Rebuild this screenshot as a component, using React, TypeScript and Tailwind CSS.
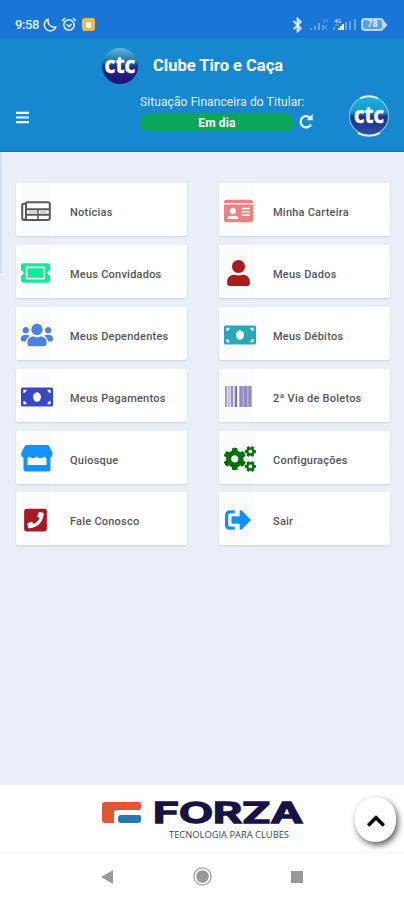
import type { ReactNode } from "react";
import {
  FaBars,
  FaBluetoothB,
  FaChevronUp,
  FaCogs,
  FaIdCard,
  FaMoneyBill,
  FaPhoneSquare,
  FaSignOutAlt,
  FaTicketAlt,
  FaUser,
  FaUsers,
} from "react-icons/fa";

type MenuItem = {
  label: string;
  icon: ReactNode;
};

function NewsIcon() {
  return (
    <svg width="30" height="21" viewBox="0 0 30 21" className="shrink-0" fill="none" stroke="#595959" strokeWidth="2">
      <path d="M5 1.2h22q1.8 0 1.8 1.8v14q0 2-2 2H3.2Q1.2 19 1.2 17V4.5q0-1.8 1.8-1.8h2M5 1.2v15q0 2.8-2 2.8" />
      <path d="M8 5.2h18" stroke="#fff" />
      <path d="M5 8.3h23M5 13.8h23" strokeWidth="1.9" />
      <path d="M8 11h8m3 0h7" strokeWidth="1.6" stroke="#c4c4c4" />
      <path d="M17 8.3v10" strokeWidth="1.5" />
    </svg>
  );
}

function BarcodeIcon() {
  return (
    <svg width="29" height="21" viewBox="0 0 29 21" className="shrink-0">
      <path d="M1 0h27v21H1z" fill="#d9d4ea" />
      <path d="M1 0h1.6v21H1zM7 0h2v21H7zM16 0h2.5v21H16zM20 0h3v21h-3zM24.500 0h2.500v21h-2.500z" fill="#9b93c3" />
      <path d="M4.500 0h1v21h-1zM15 0h13v21H15z" fill="#8a80b9" fillOpacity=".45" />
      <path d="M11.300 0h1.600v21h-1.600z" fill="#625a93" />
      <path d="M13 0h1.800v21H13z" fill="#fff" />
    </svg>
  );
}

function StoreIcon() {
  return (
    <svg width="32" height="27" viewBox="0 0 32 27" className="shrink-0" fill="#1192fc">
      <path d="M5.500 0h21q1 0 1.600 1l3 6q1.400 5-3 6-3 .6-5-1.500-2 2-3.700 1.500-2 .3-3.700-1.500-2 2-3.700 1.500-2 .3-3.700-1.500-2 2.200-5 1.500-4.300-1-2.700-6l3.300-6q.6-1 1.600-1z" />
      <path d="M2.500 12h4v8h19v-8h4v12.500q0 2-2 2h-23q-2 0-2-2z" />
    </svg>
  );
}

const items: MenuItem[] = [
  { label: "Notícias", icon: <NewsIcon /> },
  { label: "Minha Carteira", icon: <FaIdCard className="h-[26px] w-[29px] shrink-0 text-[#f08080]" /> },
  { label: "Meus Convidados", icon: <FaTicketAlt className="h-[26px] w-[29px] shrink-0 text-[#05ee91]" /> },
  { label: "Meus Dados", icon: <FaUser className="ml-[3px] h-[26px] w-[23px] shrink-0 text-[#aa1c20]" /> },
  { label: "Meus Dependentes", icon: <FaUsers className="h-[26px] w-[32px] shrink-0 text-[#4c82e2]" /> },
  { label: "Meus Débitos", icon: <FaMoneyBill className="h-[26px] w-[32px] shrink-0 text-[#2ba8b5]" /> },
  { label: "Meus Pagamentos", icon: <FaMoneyBill className="h-[26px] w-[32px] shrink-0 text-[#3848c2]" /> },
  { label: "2ª Via de Boletos", icon: <BarcodeIcon /> },
  { label: "Quiosque", icon: <StoreIcon /> },
  { label: "Configurações", icon: <FaCogs className="h-[26px] w-[32px] shrink-0 text-[#087009]" /> },
  { label: "Fale Conosco", icon: <FaPhoneSquare className="ml-[3px] h-[26px] w-[23px] shrink-0 text-[#a61b21]" /> },
  { label: "Sair", icon: <FaSignOutAlt className="ml-px h-[26px] w-[26px] shrink-0 text-[#1490fb]" /> },
];

function StatusBar() {
  return (
    <div className="flex h-[38px] shrink-0 items-center bg-[#1976d6] pl-[15px] pr-[16px] pt-[11px] text-[#e2f0ff]">
      <span className="w-[28px] text-[13px] font-medium leading-none tracking-[-0.4px]">9:58</span>
      <svg width="14" height="14" viewBox="0 0 14 14" fill="none" stroke="currentColor" strokeWidth="1.5">
        <path d="M5.2 1.2A6 6 0 1 0 12.9 9 6.300 6.300 0 0 1 5.200 1.200Z" strokeLinejoin="round" />
      </svg>
      <svg className="ml-[4px]" width="16" height="15" viewBox="0 0 16 15" fill="none" stroke="currentColor" strokeWidth="1.6">
        <circle cx="8" cy="8" r="5.200" />
        <path d="M1 4l3-3M15 4l-3-3M5.500 7.500 8 9.500l2.500-2.500" />
      </svg>
      <span className="ml-[5px] flex h-[13px] w-[13px] items-center justify-center rounded-[3px] bg-[#eeb85e]">
        <span className="h-[6px] w-[5px] rounded-full bg-white" />
      </span>
      <FaBluetoothB className="ml-auto h-[16px] w-[11px]" stroke="currentColor" strokeWidth="22" />
      <svg className="ml-[6px]" width="49" height="15" viewBox="0 0 49 15">
        <g fill="#62a3e6">
          <rect x="1" y="11" width="2" height="2" />
          <rect x="5" y="9" width="2" height="4" />
          <rect x="9" y="6" width="2" height="7" />
          <rect x="13" y="8" width="1.5" height="5" />
          <rect x="36" y="5" width="2" height="8" />
          <rect x="40" y="4" width="2" height="9" />
          <rect x="45" y="2" width="2" height="11" />
          <rect x="24" y="10" width="2" height="3" />
        </g>
        <path d="m14 8 4 5m0-5-4 5M15 2v4M18 2v4M25 8h5" stroke="#62a3e6" />
        <path d="M29 13v-2h2V9h2V7h2v6z" fill="#dcecff" />
        <text x="25" y="6" fontSize="6" fill="#dcecff">
          4G
        </text>
      </svg>
      <span className="ml-[3px] flex h-[13px] w-[23px] items-center justify-center rounded-[4px] border-2 border-[#b8d8f9] bg-[#5c9fe5] text-[9px] font-bold leading-none">
        78
      </span>
      <svg width="4" height="8" viewBox="0 0 4 8">
        <path d="M0 0l3.500 4L0 8z" fill="#b8d8f9" />
      </svg>
    </div>
  );
}

function ClubLogo({ className, ring = false }: { className: string; ring?: boolean }) {
  const id = ring ? "ball-ring" : "ball";
  return (
    <svg viewBox="0 0 42 42" className={className}>
      <defs>
        <linearGradient id={id} x1="0" y1="0" x2="0" y2="1">
          <stop offset="0" stopColor={ring ? "#18b4e0" : "#62b8dc"} />
          <stop offset="0.4" stopColor={ring ? "#1697cf" : "#166da8"} />
          <stop offset="0.52" stopColor="#1c2f83" />
          <stop offset="1" stopColor={ring ? "#304fb0" : "#280b7c"} />
        </linearGradient>
      </defs>
      <circle cx="21" cy="21" r="20" fill={`url(#${id})`} />
      {ring && (
        <>
          <circle cx="21" cy="21" r="19.5" fill="none" stroke="#7fbdea" strokeWidth="1.2" />
          <path d="M12 3.300Q21-.8 30 3.300M10 38q11 5.500 22 0" fill="none" stroke="#e4ecfa" strokeWidth="2" />
        </>
      )}
      <text
        x="21"
        y={ring ? "28" : "29"}
        textAnchor="middle"
        textLength={ring ? "30" : "34"}
        lengthAdjust="spacingAndGlyphs"
        fontSize={ring ? "23" : "25"}
        fontWeight="700"
        fill="#fff"
        stroke="#fff"
        strokeWidth="0.5"
        className="font-['Open_Sans',sans-serif]"
      >
        ctc
      </text>
    </svg>
  );
}

function Header() {
  return (
    <header className="h-[114px] shrink-0 border-b border-[#0b75bd] bg-[#1787cf] text-white">
      <div className="flex h-[57px] items-center pb-[2px] pl-[101px]">
        <ClubLogo className="h-[38px] w-[38px]" />
        <h1 className="ml-[14px] mt-px whitespace-nowrap text-[16.5px] font-bold leading-none">Clube Tiro e Caça</h1>
      </div>
      <div className="flex pl-[16px]">
        <button className="mt-[15px] h-[15px] w-[13px]" aria-label="Menu">
          <FaBars className="h-[15px] w-[13px]" />
        </button>
        <div className="ml-[111px] w-[154px]">
          <div className="mt-[1px] whitespace-nowrap text-[12px] leading-[13px] tracking-[0.1px] text-[#e0f1ff]">
            Situação Financeira do Titular:
          </div>
          <div className="mt-[5px] flex h-[18px] items-center justify-center rounded-full bg-[#08a65a] text-[12px] font-bold tracking-[0.15px]">
            Em dia
          </div>
        </div>
        <svg className="ml-[4px] mt-[18px]" width="16" height="17" viewBox="0 0 16 17" fill="none" stroke="#e8f5ff" strokeWidth="2.3">
          <path d="M12.500 5.200A5.600 5.600 0 1 0 13 11.600" />
          <path d="M14.700 1v6.300H8.400z" fill="#e8f5ff" stroke="none" />
        </svg>
        <ClubLogo ring className="ml-[34px] h-[42px] w-[42px]" />
      </div>
    </header>
  );
}

function MenuCard({ label, icon }: MenuItem) {
  return (
    <div className="flex h-[53px] rounded-[2px] bg-white pl-[5px] shadow-[0_1px_2px_rgba(0,0,0,0.12)]">
      <div className="flex w-[29px] items-center bg-[#fcfcfc] pt-[3px]">{icon}</div>
      <span className="ml-[20px] mt-[6px] self-center whitespace-nowrap text-[11px] font-medium leading-none tracking-[0.23px] text-[#555]">
        {label}
      </span>
    </div>
  );
}

function ForzaLogo() {
  return (
    <svg width="202" height="40" viewBox="0 0 202 40" className="ml-[102px] overflow-visible">
      <path d="M3 0h34q2 0 2 2v4q0 2-2 2H15q-3 0-3 3v10H3q-3 0-3-3V3q0-3 3-3z" fill="#e35632" />
      <path d="M19 13h18q2 0 2 2v3q0 3-3 3H19q-3 0-3-3v-2q0-3 3-3z" fill="#2679b3" />
      <text
        x="51"
        y="21"
        textLength="150"
        lengthAdjust="spacingAndGlyphs"
        fontSize="28"
        fontWeight="600"
        fill="#151444"
        stroke="#151444"
        strokeWidth="1.6"
        className="font-[Inter,sans-serif]"
      >
        FORZA
      </text>
      <text
        x="67"
        y="36"
        textLength="120"
        lengthAdjust="spacingAndGlyphs"
        fontSize="9"
        fill="#424250"
        className="font-['Open_Sans',sans-serif]"
      >
        TECNOLOGIA PARA CLUBES
      </text>
    </svg>
  );
}

export default function App() {
  return (
    <div className="flex h-[900px] w-[404px] flex-col overflow-hidden bg-[#eaeef6] font-[Roboto,sans-serif]">
      <StatusBar />
      <Header />
      <main className="flex grow">
        <div className="h-[121px] w-[2px] bg-[#cfdfed]" />
        <div className="grid grid-cols-[171px_171px] content-start gap-x-[32px] gap-y-[8.9px] pl-[14px] pt-[31px]">
          {items.map((item) => (
            <MenuCard key={item.label} {...item} />
          ))}
        </div>
      </main>
      <footer className="h-[115px] shrink-0 bg-white">
        <div className="flex h-[68px] border-b border-[#f5f5f5] pt-[17px]">
          <ForzaLogo />
          <button
            aria-label="Voltar ao topo"
            className="-mt-[5px] ml-[51px] flex h-[45px] w-[41px] shrink-0 items-center justify-center rounded-full bg-white shadow-[2px_3px_6px_rgba(0,0,0,0.65)]"
          >
            <FaChevronUp className="mt-[2px] h-[20px] w-[18px] text-black" stroke="#000" strokeWidth="12" />
          </button>
        </div>
        <div className="flex h-[47px] items-center pl-[101px] text-[#999]">
          <svg width="12" height="14" viewBox="0 0 12 14" fill="currentColor">
            <path d="M12 0v14L0 7z" />
          </svg>
          <svg className="ml-[80px]" width="19" height="19" viewBox="0 0 19 19">
            <circle cx="9.5" cy="9.5" r="8.600" fill="none" stroke="currentColor" strokeWidth="1.2" />
            <circle cx="9.5" cy="9.5" r="6.300" fill="currentColor" />
          </svg>
          <span className="ml-[79px] h-[12px] w-[12px] bg-[#999]" />
        </div>
      </footer>
    </div>
  );
}
